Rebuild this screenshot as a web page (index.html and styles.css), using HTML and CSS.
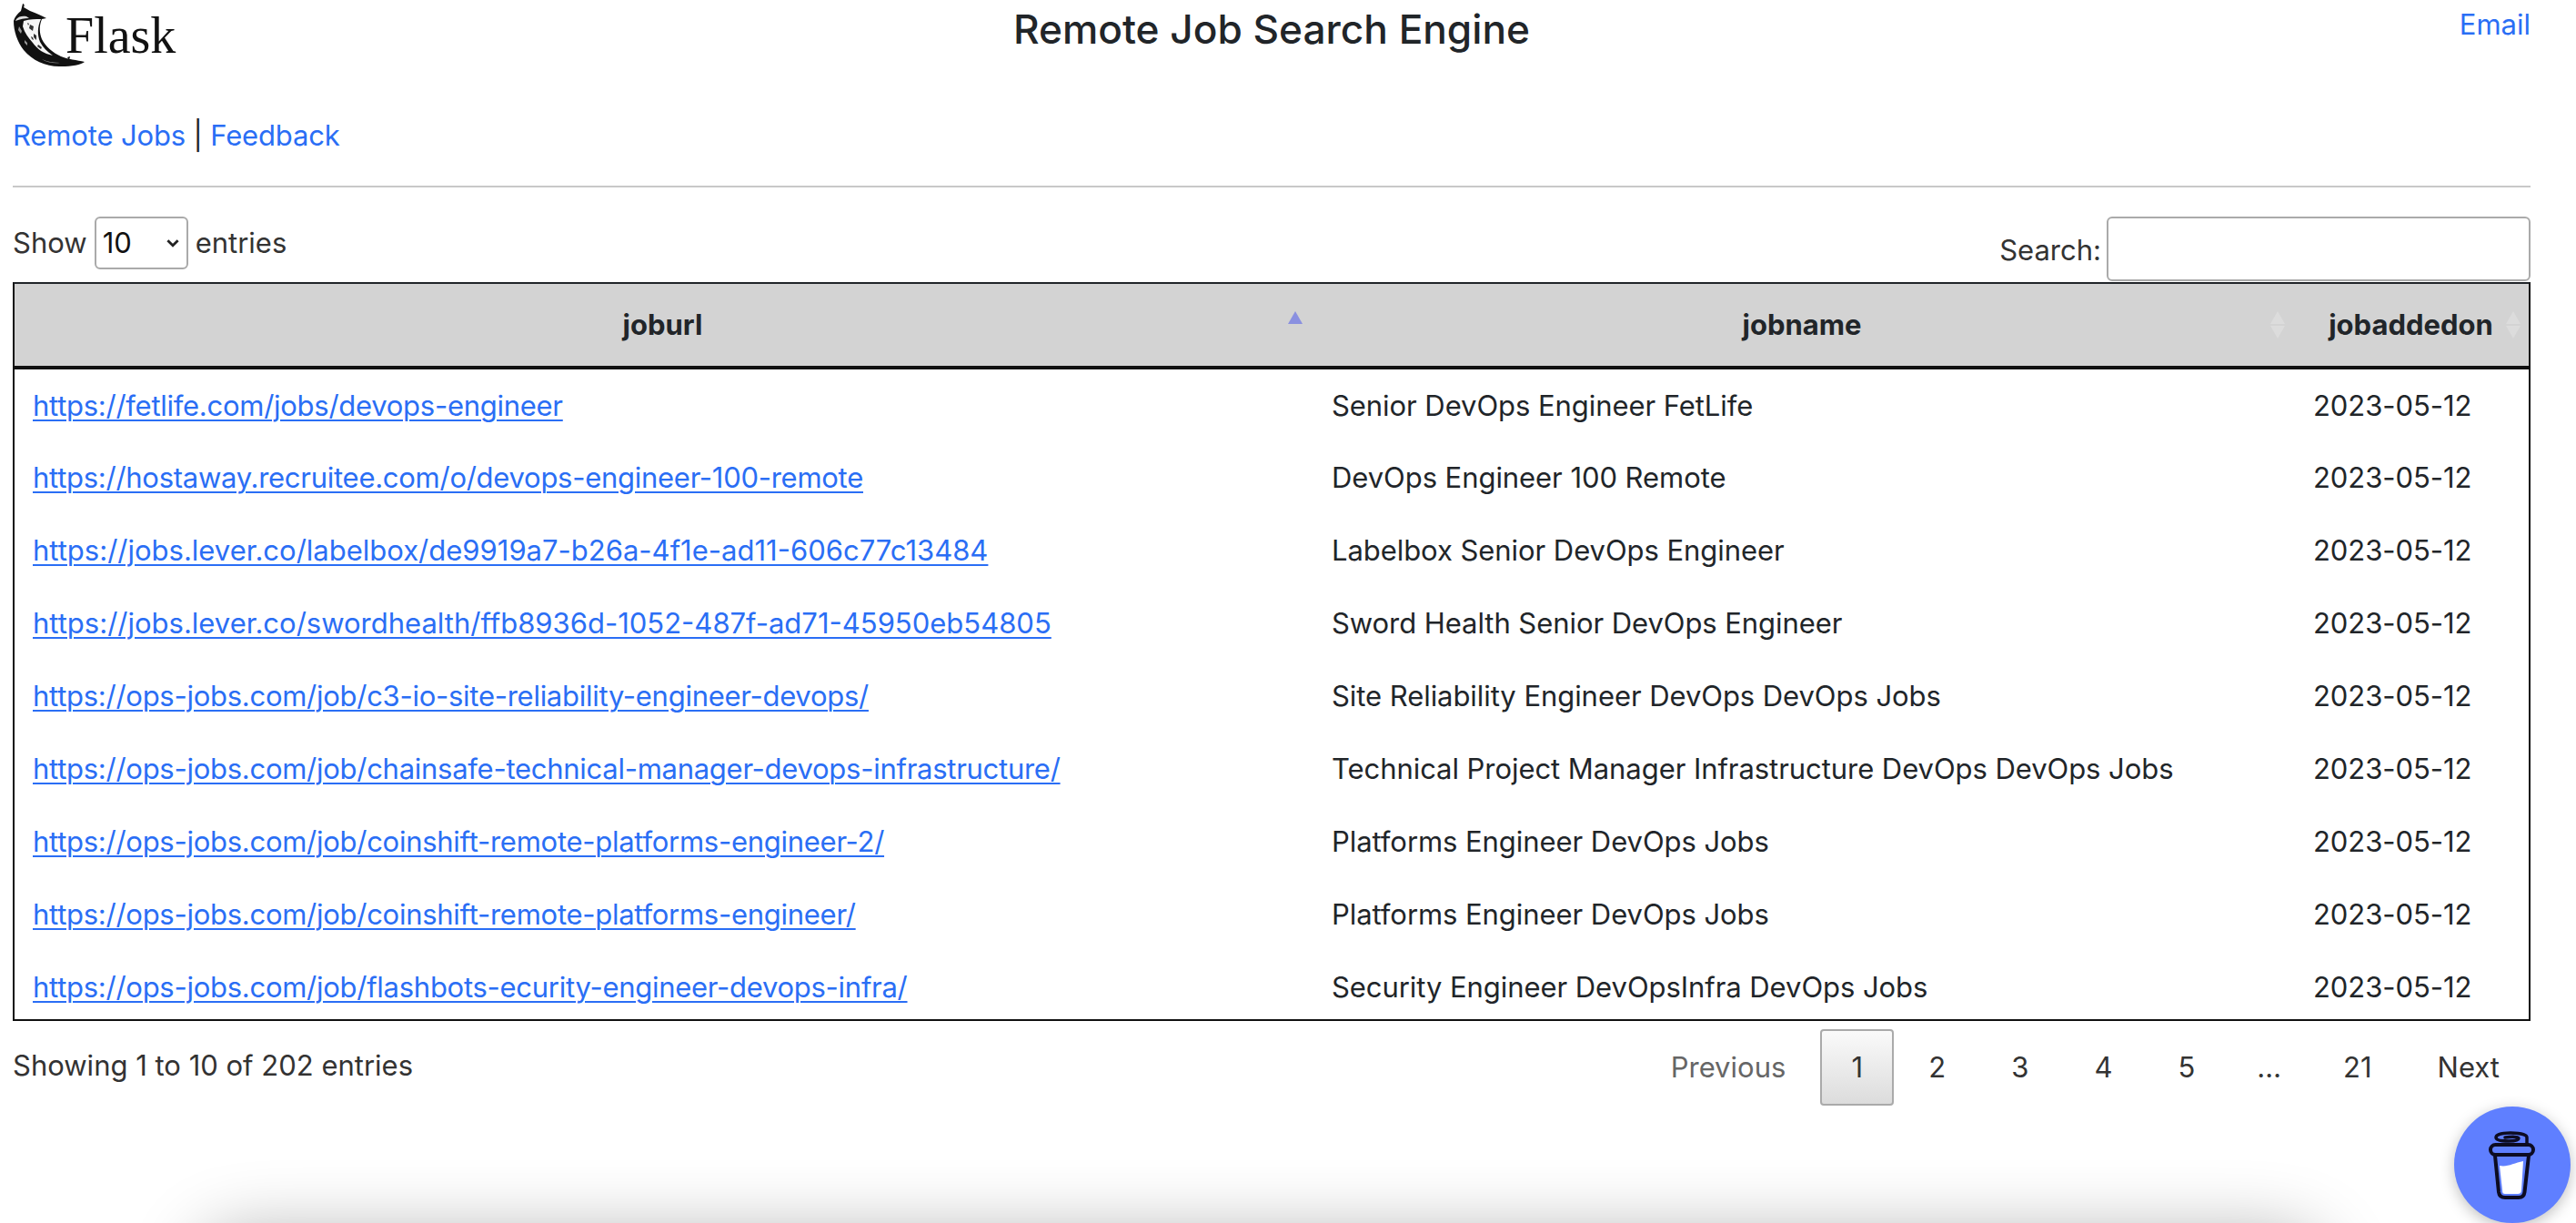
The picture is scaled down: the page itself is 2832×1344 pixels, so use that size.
FILE: index.html
```html
<!DOCTYPE html>
<html lang="en">
<head>
<meta charset="utf-8">
<title>Remote Job Search Engine</title>
<link rel="stylesheet" href="styles.css">
</head>
<body>
<header class="top">
  <div class="logo">
    <svg class="horn" viewBox="0 0 96 76" width="96" height="76" aria-hidden="true">
      <path d="M25 4 C27 4 27 7 26 8 L33 12 C40 15 46 17 51 20 L46 21 C43 28 43 36 46 43 C50 51 58 58 67 62 C74 65 85 66 93 68 C90 71 78 73 68 73 C52 74 36 67 26 55 C19 46 15 34 15 23 C16 19 19 15 23 12 L24 8 Z" fill="#111"/>
      <path d="M26 23 C33 21 39 21 45 21 C41 30 41 38 44 46 C47 52 52 57 58 61 C48 59 41 54 36 47 C31 41 27 36 25 29 Z" fill="#f6f6f6"/>
      <path d="M33 27 l4 2 -1 5 -4 -3z M37 37 l3 2 0 5 -3 -3z M30 25 l2 1 -1 2z M42 49 l4 3 -1 2 -4 -3z M34 40 l2 1 1 3 -2 -1z" fill="#333"/>
      <path d="M17 23 C22 21 27 20 32 20 L29 18 C25 17 20 18 18 21 Z" fill="#ddd"/>
      <path d="M21 29 l3 5 -1 3 -3 -4z M27 44 l3 3 0 3 -3 -3z" fill="#999"/>
      <path d="M46 65 C52 68 60 69 66 69 C60 70 52 69 46 65 Z" fill="#aaa"/>
      <path d="M74 63 L77 62 L76 66 Z" fill="#111"/>
    </svg>
    <span class="wordmark">Flask</span>
  </div>
  <h1 class="title">Remote Job Search Engine</h1>
  <a class="link email" href="#">Email</a>
</header>
<nav class="nav"><a class="link" href="#">Remote Jobs</a> | <a class="link" href="#">Feedback</a></nav>
<hr class="rule">
<div class="controls">
  <label class="length">Show
    <span class="select">10<svg viewBox="0 0 16 16" width="18" height="18" aria-hidden="true"><path d="M3 5.500 L8 10.500 L13 5.500" fill="none" stroke="#222" stroke-width="2.400"/></svg></span>
    entries</label>
  <label class="search"><span class="search-label">Search:</span><span class="input"></span></label>
</div>
<div class="scroll">
  <table class="jobs">
    <colgroup><col class="c1"><col class="c2"><col class="c3"></colgroup>
    <thead>
      <tr>
        <th class="sort asc">joburl</th>
        <th class="sort">jobname</th>
        <th class="sort">jobaddedon</th>
      </tr>
    </thead>
    <tbody>
      <tr><td><a class="link u" href="#">https://fetlife.com/jobs/devops-engineer</a></td><td>Senior DevOps Engineer FetLife</td><td>2023-05-12</td></tr>
      <tr><td><a class="link u" href="#">https://hostaway.recruitee.com/o/devops-engineer-100-remote</a></td><td>DevOps Engineer 100 Remote</td><td>2023-05-12</td></tr>
      <tr><td><a class="link u hex" href="#">https://jobs.lever.co/labelbox/de9919a7-b26a-4f1e-ad11-606c77c13484</a></td><td>Labelbox Senior DevOps Engineer</td><td>2023-05-12</td></tr>
      <tr><td><a class="link u hex" href="#">https://jobs.lever.co/swordhealth/ffb8936d-1052-487f-ad71-45950eb54805</a></td><td>Sword Health Senior DevOps Engineer</td><td>2023-05-12</td></tr>
      <tr><td><a class="link u" href="#">https://ops-jobs.com/job/c3-io-site-reliability-engineer-devops/</a></td><td>Site Reliability Engineer DevOps DevOps Jobs</td><td>2023-05-12</td></tr>
      <tr><td><a class="link u" href="#">https://ops-jobs.com/job/chainsafe-technical-manager-devops-infrastructure/</a></td><td>Technical Project Manager Infrastructure DevOps DevOps Jobs</td><td>2023-05-12</td></tr>
      <tr><td><a class="link u" href="#">https://ops-jobs.com/job/coinshift-remote-platforms-engineer-2/</a></td><td>Platforms Engineer DevOps Jobs</td><td>2023-05-12</td></tr>
      <tr><td><a class="link u" href="#">https://ops-jobs.com/job/coinshift-remote-platforms-engineer/</a></td><td>Platforms Engineer DevOps Jobs</td><td>2023-05-12</td></tr>
      <tr><td><a class="link u" href="#">https://ops-jobs.com/job/flashbots-ecurity-engineer-devops-infra/</a></td><td>Security Engineer DevOpsInfra DevOps Jobs</td><td>2023-05-12</td></tr>
    </tbody>
  </table>
</div>
<footer class="foot">
  <div class="info">Showing 1 to 10 of 202 entries</div>
  <div class="pager">
    <span class="page prev">Previous</span>
    <span class="page current">1</span>
    <span class="page">2</span>
    <span class="page">3</span>
    <span class="page">4</span>
    <span class="page">5</span>
    <span class="page dots">…</span>
    <span class="page">21</span>
    <span class="page">Next</span>
  </div>
</footer>
<div class="ghost"></div>
<div class="bmc">
  <svg viewBox="0 0 128 128" width="128" height="128" aria-hidden="true">
    <path d="M50 65 C58 67 66 62 76 60 L74 92 C74 95 72 96 70 96 H56 C54 96 53 95 53 92 Z" fill="#fff"/>
    <path d="M45 54 L49 94 C49.500 98 52 100 56 100 H71 C75 100 77 98 77.500 94 L82 54" fill="none" stroke="#0d0c22" stroke-width="4" stroke-linejoin="round"/>
    <rect x="40" y="42" width="47" height="11" rx="5.500" fill="none" stroke="#0d0c22" stroke-width="4"/>
    <path d="M80 41 L80 34 C80 31 72 29 62 29 C52 29 46 31 46 34 C46 37 52 38 60 38 C66 38 71 37 71 35 C71 33 64 33 56 34" fill="none" stroke="#0d0c22" stroke-width="3.500" stroke-linecap="round"/>
  </svg>
</div>
</body>
</html>
```
FILE: styles.css
```css
* { box-sizing: border-box; }
html, body { height: 100%; }
body {
  margin: 0;
  padding: 0 50px 0 14px;
  overflow: hidden;
  background: #fff;
  color: #212529;
  font-family: Inter, "Liberation Sans", sans-serif;
  font-size: 31px;
  line-height: 46px;
}
.link { color: #2a6ef5; text-decoration: none; }
.link.u { text-decoration: underline; text-underline-offset: 4px; text-decoration-thickness: 2px; letter-spacing: -.27px; }
.link.u.hex { letter-spacing: 0; }

.top { display: flex; justify-content: space-between; align-items: flex-start; height: 84px; }
.logo { display: flex; align-items: flex-start; width: 340px; height: 76px; }
.horn { flex: none; margin: 0 -24px 0 -14px; }
.wordmark {
  font-family: "Liberation Serif", serif;
  font-size: 56px;
  line-height: 62px;
  color: #111;
  margin-top: 8px;
}
.title { margin: 7px 0 0; font-size: 44.2px; line-height: 50px; font-weight: 500; color: #212529; }
.email { width: 340px; text-align: right; margin-top: 4px; }

.nav { margin-top: 42px; height: 46px; letter-spacing: -.15px; }
.rule { margin: 32px 0 0; border: 0; height: 2px; background: #c8c8c8; }

.controls { display: flex; justify-content: space-between; align-items: flex-start; margin-top: 32px; height: 72px; color: #333; }
.length { display: flex; align-items: center; gap: 8px; height: 58px; }
.select {
  display: flex; align-items: center; justify-content: space-between;
  width: 103px; height: 58px; padding: 0 6px 0 7px;
  border: 2px solid #aaa; border-radius: 6px; color: #111;
}
.search { display: flex; align-items: flex-start; gap: 6px; height: 72px; }
.search-label { margin-top: 14px; }
.input { display: block; width: 466px; height: 71px; border: 2px solid #aaa; border-radius: 6px; background: #fff; }

.scroll { height: 812px; overflow: hidden; border: 2px solid #111; border-top-color: #212529; }
.jobs { width: 100%; border-collapse: collapse; table-layout: fixed; }
.c1 { width: 1425px; }
.c2 { width: 1080px; }
.jobs th {
  position: relative;
  height: 92px; padding: 0; background: #d3d3d3;
  border-bottom: 4px solid #111;
  font-weight: 700; text-align: center;
}
.sort::before, .sort::after {
  content: ""; position: absolute; right: 9px;
  border-left: 8px solid transparent; border-right: 8px solid transparent;
}
.sort::before { top: 30px; border-bottom: 14px solid #dcdcdc; }
.sort::after { top: 46px; border-top: 14px solid #dcdcdc; }
.sort.asc::before { border-bottom-color: #8a90e0; }
.sort.asc::after { border-top-color: transparent; }
.jobs td { height: 80px; padding: 1px 0 0 20px; white-space: nowrap; vertical-align: middle; letter-spacing: -.06px; }
.jobs td:nth-child(2) { padding-left: 23px; }
.jobs td:nth-child(3) { padding-left: 22px; }

.foot { display: flex; justify-content: space-between; align-items: flex-start; margin-top: 8px; color: #333; }
.info { margin-top: 18px; }
.pager { display: flex; align-items: center; height: 84px; margin-top: 1px; }
.page { display: flex; align-items: center; justify-content: center; height: 84px; padding: 0 34px; margin-left: 4px; }
.prev { color: #666; }
.current {
  width: 81px; padding: 0;
  border: 2px solid #aaa; border-radius: 4px;
  background: linear-gradient(#fafafa, #dcdcdc);
}
.dots { padding: 0 30px; }

.ghost {
  position: fixed; left: 240px; right: 300px; top: 1378px; height: 300px;
  border-radius: 24px;
  box-shadow: 0 0 80px 20px rgba(0,0,0,.33);
}
.bmc {
  position: fixed; right: 6px; bottom: 0; width: 128px; height: 128px;
  border-radius: 50%; background: #5f7fff;
  box-shadow: 0 4px 16px rgba(0,0,0,.25);
}
.bmc svg { display: block; }
```
